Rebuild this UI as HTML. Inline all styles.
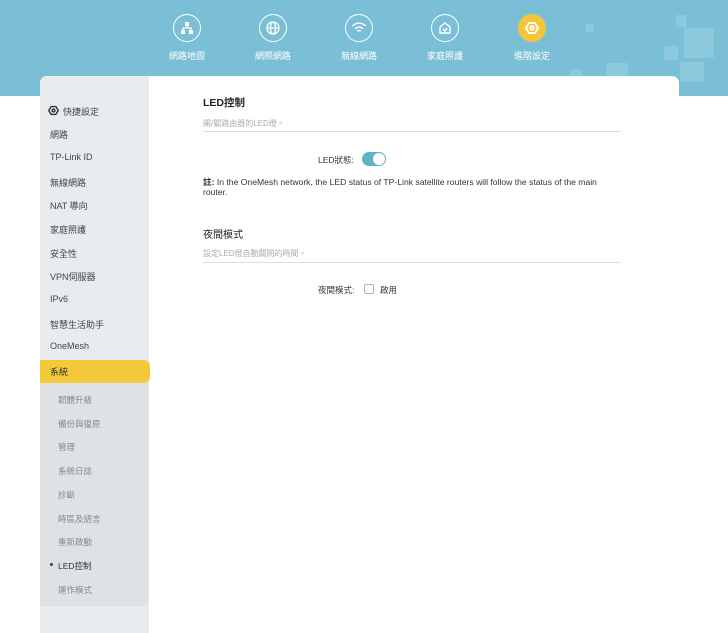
<!DOCTYPE html>
<html><head><meta charset="utf-8"><style>
*{margin:0;padding:0;box-sizing:border-box}
html,body{width:728px;height:633px;overflow:hidden}
body{background:#fff;font-family:"Liberation Sans","Noto Sans CJK TC",sans-serif;position:relative}
.hdr{position:absolute;left:0;top:0;width:728px;height:96px;background:#7bbfd6}
.sq{position:absolute;background:#8cc9dd}
.nav{position:absolute;top:14px;width:80px;text-align:center;color:#fff;font-size:9px}
.nav .c{width:28px;height:28px;border:1.6px solid #fff;border-radius:50%;margin:0 auto 7px;display:flex;align-items:center;justify-content:center}
.nav .c.y{background:#f3c63a;border-color:#f3c63a}
.card{position:absolute;left:40px;top:76px;width:639px;height:580px;background:#fff;border-radius:7px 7px 0 0;overflow:hidden}
.side{position:absolute;left:0;top:0;width:109px;height:100%;background:#e9ecee}
.sub{position:absolute;left:0;top:307px;width:109px;height:223px;background:#dfe2e5;border-radius:0 0 6px 0}
.it{position:absolute;left:10px;font-size:9px;color:#444}
.si{position:absolute;left:18px;font-size:8.5px;color:#888}
.sel{position:absolute;left:0;top:284px;width:110px;height:23px;background:#f3c83a;border-radius:0 6px 6px 0}
.m{position:absolute;font-size:9px;color:#333}
.line{position:absolute;left:163px;width:418px;height:1px;background:#ddd}
</style></head><body>
<div class="hdr">
<div class="sq" style="left:586px;top:24px;width:8px;height:8px"></div>
<div class="sq" style="left:676px;top:15px;width:10px;height:12px"></div>
<div class="sq" style="left:684px;top:28px;width:30px;height:30px"></div>
<div class="sq" style="left:664px;top:46px;width:14px;height:14px"></div>
<div class="sq" style="left:606px;top:63px;width:22px;height:13px"></div>
<div class="sq" style="left:680px;top:62px;width:24px;height:20px"></div>
<div class="sq" style="left:570px;top:70px;width:12px;height:6px"></div>
<div class="nav" style="left:147px"><div class="c"><svg width="14" height="14" viewBox="0 0 14 14" fill="#fff"><rect x="5" y="1" width="4" height="4"/><rect x="1" y="9" width="4" height="4"/><rect x="9" y="9" width="4" height="4"/><path d="M7 5v2M3 9V7h8v2" stroke="#fff" stroke-width="1.3" fill="none"/></svg></div>網路地圖</div>
<div class="nav" style="left:233px"><div class="c"><svg width="16" height="16" viewBox="0 0 16 16" fill="none" stroke="#fff" stroke-width="1.3"><circle cx="8" cy="8" r="6"/><ellipse cx="8" cy="8" rx="2.5" ry="6"/><path d="M2 8h12"/></svg></div>網際網路</div>
<div class="nav" style="left:319px"><div class="c"><svg width="16" height="14" viewBox="0 0 16 14" fill="none" stroke="#fff" stroke-width="1.4"><path d="M1.5 5a9 9 0 0 1 13 0M4 7.8a5.5 5.5 0 0 1 8 0M6.3 10.3a2.2 2.2 0 0 1 3.4 0"/></svg></div>無線網路</div>
<div class="nav" style="left:405px"><div class="c"><svg width="14" height="14" viewBox="0 0 14 14" fill="none" stroke="#fff" stroke-width="1.4"><path d="M2 6l5-4 5 4v6H2z"/><path d="M5 8l2 2 2-3"/></svg></div>家庭照護</div>
<div class="nav" style="left:492px"><div class="c y"><svg width="14" height="14" viewBox="0 0 14 14" fill="none" stroke="#fff" stroke-width="1.8"><path d="M4 2h6l3 5-3 5H4L1 7z"/><circle cx="7" cy="7" r="1.8"/></svg></div>進階設定</div>
<div style="position:absolute;left:524px;top:88px;border-left:8px solid transparent;border-right:8px solid transparent;border-bottom:8px solid #fff"></div>
</div>
<div class="card">
<div class="side"></div>
<div class="sub"></div>
<div class="sel"></div>
<svg style="position:absolute;left:8px;top:29px" width="11" height="11" viewBox="0 0 14 14" fill="none" stroke="#333" stroke-width="1.8"><path d="M4 2h6l3 5-3 5H4L1 7z"/><circle cx="7" cy="7" r="1.8"/></svg>
<div class="it" style="left:23px;top:29px">快捷設定</div>
<div class="it" style="top:52px">網路</div>
<div class="it" style="top:76px">TP-Link ID</div>
<div class="it" style="top:100px">無線網路</div>
<div class="it" style="top:123px">NAT 導向</div>
<div class="it" style="top:147px">家庭照護</div>
<div class="it" style="top:171px">安全性</div>
<div class="it" style="top:194px">VPN伺服器</div>
<div class="it" style="top:218px">IPv6</div>
<div class="it" style="top:242px">智慧生活助手</div>
<div class="it" style="top:265px">OneMesh</div>
<div class="it" style="top:289px;color:#333">系統</div>
<div class="si" style="top:318px">韌體升級</div>
<div class="si" style="top:342px">備份與復原</div>
<div class="si" style="top:365px">管理</div>
<div class="si" style="top:389px">系統日誌</div>
<div class="si" style="top:413px">診斷</div>
<div class="si" style="top:437px">時區及語言</div>
<div class="si" style="top:460px">重新啟動</div>
<div style="position:absolute;left:10px;top:487px;width:3px;height:3px;border-radius:50%;background:#345"></div>
<div class="si" style="top:484px;color:#333">LED控制</div>
<div class="si" style="top:508px">運作模式</div>
<div class="m" style="left:163px;top:19px;font-size:10.5px;font-weight:bold;color:#222">LED控制</div>
<div class="m" style="left:163px;top:42px;font-size:8px;color:#aaa">開/關路由器的LED燈。</div>
<div class="line" style="top:55px"></div>
<div class="m" style="left:278px;top:78px;font-size:8.5px">LED狀態:</div>
<div style="position:absolute;left:322px;top:76px;width:24px;height:14px;border-radius:7px;background:#5fb3c9"><div style="position:absolute;right:1px;top:1px;width:12px;height:12px;border-radius:50%;background:#fff"></div></div>
<div class="m" style="left:163px;top:101px;font-size:8.6px;line-height:10px;width:405px"><b>註:</b> In the OneMesh network, the LED status of TP-Link satellite routers will follow the status of the main router.</div>
<div class="m" style="left:163px;top:150px;font-size:10px;color:#222">夜間模式</div>
<div class="m" style="left:163px;top:172px;font-size:8px;color:#aaa">設定LED燈自動關閉的時間。</div>
<div class="line" style="top:186px"></div>
<div class="m" style="left:278px;top:208px;font-size:8.5px">夜間模式:</div>
<div style="position:absolute;left:324px;top:208px;width:10px;height:10px;border:1px solid #8cc4d6;border-radius:2px"></div>
<div class="m" style="left:340px;top:208px;font-size:8.5px">啟用</div>
</div>
</body></html>
